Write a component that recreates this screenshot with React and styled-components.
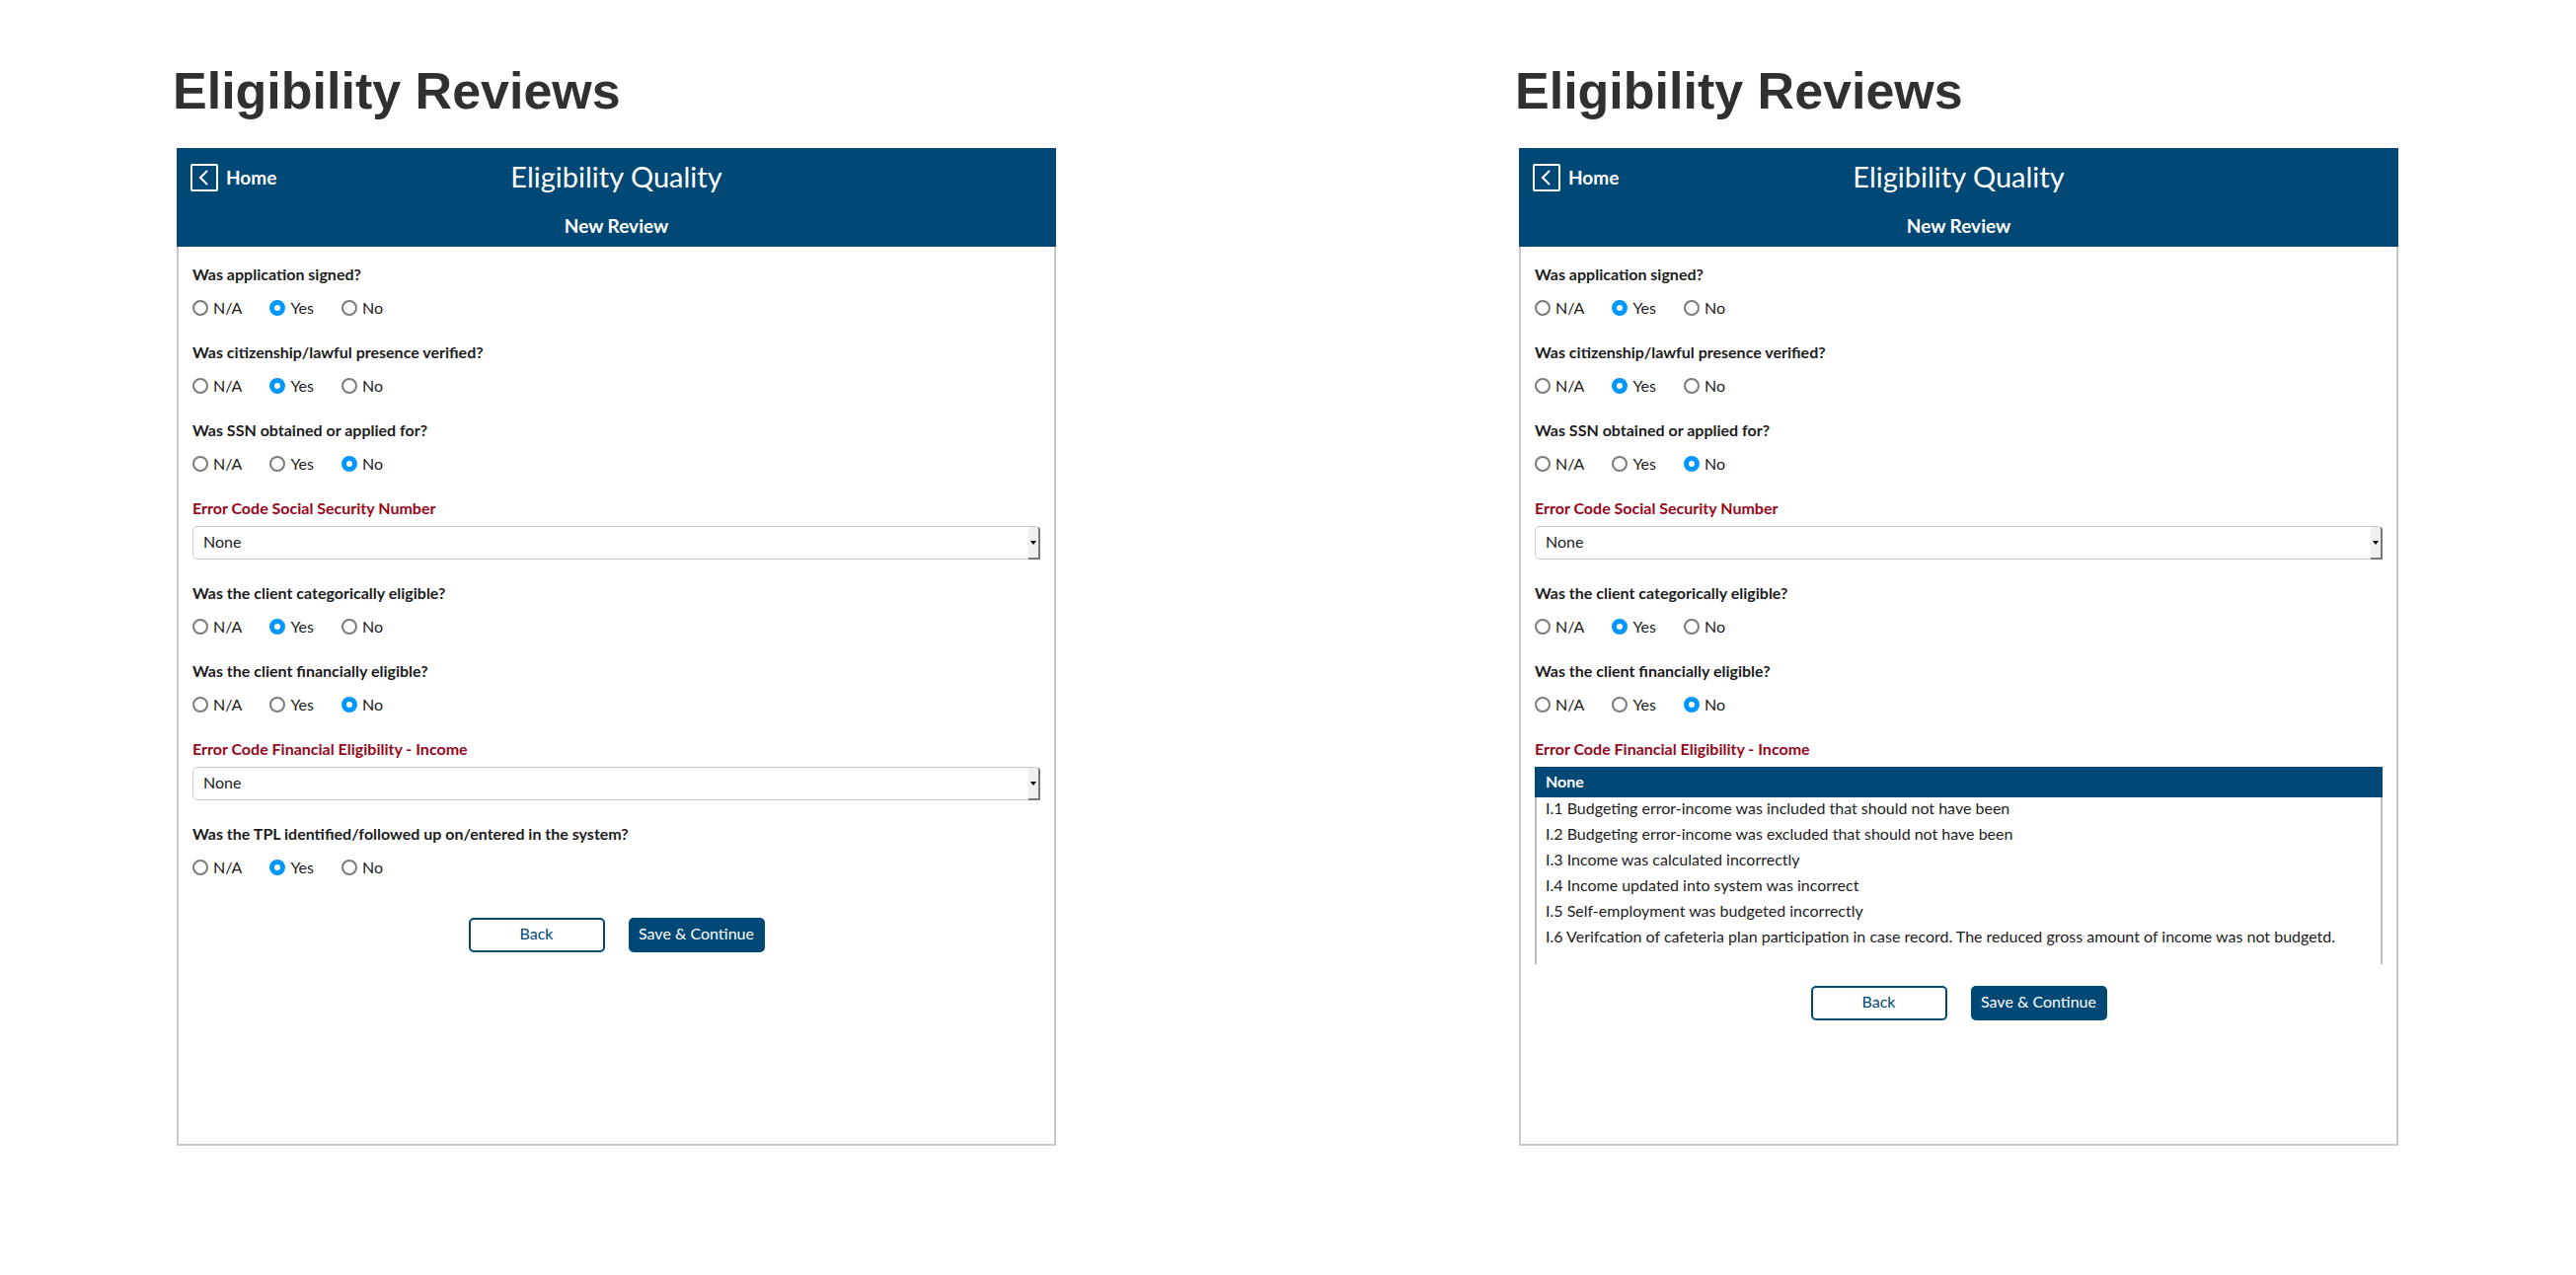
import React, { useId, useState } from "react";
import styled, { createGlobalStyle } from "styled-components";

const navy = "#004876";
const ink = "#1c1c1c";

const GlobalStyle = createGlobalStyle`
  *, *::before, *::after { box-sizing: border-box; }
  body {
    margin: 0;
    background: #fff;
    color: ${ink};
    font-family: Lato, "Liberation Sans", sans-serif;
    font-size: 16px;
    line-height: 24px;
  }
  button, select, input { font: inherit; color: inherit; }
`;

const Page = styled.main`
  display: grid;
  grid-template-columns: repeat(2, minmax(0, 900px));
  justify-content: space-between;
  gap: 48px;
  padding: 60px 175px 130px;
`;

const Title = styled.h1`
  margin: 0 0 26px;
  color: #303030;
  font: bold 52px/64px "Liberation Sans", Arial, sans-serif;
`;

const Card = styled.section`
  display: flex;
  flex-direction: column;
  min-height: 1011px;
  margin: 0 5px 0 4px;
`;

const Header = styled.header`
  display: grid;
  grid-template-columns: 1fr auto 1fr;
  grid-template-rows: 60px 40px;
  align-items: center;
  padding: 0 14px;
  background: ${navy};
  color: #fff;
`;

const HomeLink = styled.a`
  display: inline-flex;
  align-items: center;
  justify-self: start;
  gap: 8px;
  color: #fff;
  font-size: 19px;
  font-weight: 700;
  text-decoration: none;
`;

const AppName = styled.h2`
  margin: 0;
  padding-bottom: 2px;
  font-size: 29px;
  font-weight: 400;
  line-height: 32px;
`;

const StepName = styled.h3`
  grid-column: 1 / -1;
  margin: 0;
  padding-bottom: 2px;
  font-size: 19px;
  font-weight: 700;
  text-align: center;
`;

const Form = styled.form`
  flex: 1;
  padding: 16px 14px 0;
  border: 2px solid #c9c9c9;
  border-top: 0;
`;

const Question = styled.fieldset`
  min-width: 0;
  height: 79px;
  margin: 0;
  padding: 0;
  border: 0;
`;

const Prompt = styled.legend`
  padding: 0;
  font-weight: 700;
`;

const Choices = styled.div`
  display: flex;
  gap: 28px;
  padding-top: 10px;
`;

const Choice = styled.label`
  display: flex;
  align-items: center;
  gap: 5px;
`;

const Radio = styled.input`
  appearance: none;
  width: 16px;
  height: 16px;
  margin: 0;
  border: 2px solid #7c7c7c;
  border-radius: 50%;
  background: #fff;
  &:checked { border: 5px solid #0096ff; }
`;

const Field = styled.div`
  height: ${(p) => (p.$open ? "auto" : "86px")};
`;

const FieldLabel = styled.label`
  display: block;
  margin-bottom: 6px;
  color: #96071b;
  font-weight: 700;
`;

const SelectBox = styled.div`
  position: relative;
`;

const Select = styled.select`
  appearance: none;
  display: block;
  width: 100%;
  height: 34px;
  padding: 0 24px 2px 10px;
  border: 1px solid #c9c9c9;
  border-radius: 5px;
  background: #fff;
`;

const Stepper = styled.span`
  position: absolute;
  top: 1px;
  right: 0;
  bottom: 0;
  display: flex;
  align-items: center;
  justify-content: center;
  width: 12px;
  border-right: 2px solid #777;
  border-bottom: 2px solid #777;
  border-top-right-radius: 3px;
  background: #efefef;
  pointer-events: none;
`;

const ListBox = styled.select`
  appearance: none;
  display: block;
  width: 100%;
  height: 200px;
  padding: 0;
  border: 0;
  border-radius: 0;
  outline: 0;
  overflow: hidden;
  background: #fff;
`;

const Option = styled.option`
  height: 26px;
  padding: 1px 9px 0;
  border: solid #bbb;
  border-width: 0 2px;
  line-height: 24px;
  &:last-child { height: 39px; }
  &:checked {
    height: 31px;
    padding: 5px 11px 0;
    border: 0;
    background: linear-gradient(${navy}, ${navy});
    font-weight: 700;
    -webkit-text-fill-color: #fff;
  }
`;

const Actions = styled.div`
  display: flex;
  justify-content: center;
  gap: 24px;
  padding-top: ${(p) => (p.$tight ? "22px" : "18px")};
`;

const Button = styled.button`
  width: 138px;
  height: 35px;
  padding: 0 0 3px;
  border: 2px solid ${navy};
  border-radius: 5px;
  background: ${(p) => (p.$primary ? navy : "#fff")};
  color: ${(p) => (p.$primary ? "#fff" : navy)};
  white-space: nowrap;
`;

function BackIcon() {
  return (
    <svg width="28" height="28" viewBox="0 0 28 28" fill="none" stroke="#fff" strokeWidth="2" aria-hidden="true">
      <rect x="1" y="1" width="26" height="26" rx="1" />
      <path d="M17 7 L10 14 L17 21" />
    </svg>
  );
}

function YesNo({ children, answer }) {
  const name = useId();
  const [value, setValue] = useState(answer);
  return (
    <Question>
      <Prompt>{children}</Prompt>
      <Choices>
        {["N/A", "Yes", "No"].map((c) => (
          <Choice key={c}>
            <Radio type="radio" name={name} value={c} checked={value === c} onChange={() => setValue(c)} />
            {c}
          </Choice>
        ))}
      </Choices>
    </Question>
  );
}

const incomeCodes = [
  "None",
  "I.1 Budgeting error-income was included that should not have been",
  "I.2 Budgeting error-income was excluded that should not have been",
  "I.3 Income was calculated incorrectly",
  "I.4 Income updated into system was incorrect",
  "I.5 Self-employment was budgeted incorrectly",
  "I.6 Verifcation of cafeteria plan participation in case record. The reduced gross amount of income was not budgetd.",
];

function ErrorCode({ label, options = ["None"], open }) {
  const id = useId();
  return (
    <Field $open={open}>
      <FieldLabel htmlFor={id}>{label}</FieldLabel>
      {open ? (
        <ListBox id={id} size={7} defaultValue="None">
          {options.map((o) => <Option key={o}>{o}</Option>)}
        </ListBox>
      ) : (
        <SelectBox>
          <Select id={id} defaultValue="None">
            {options.map((o) => <option key={o}>{o}</option>)}
          </Select>
          <Stepper aria-hidden="true">
            <svg width="6" height="4" viewBox="0 0 6 4"><path d="M0 0H6L3 4Z" fill="#000" /></svg>
          </Stepper>
        </SelectBox>
      )}
    </Field>
  );
}

function Review({ incomeOpen }) {
  return (
    <div>
      <Title>Eligibility Reviews</Title>
      <Card>
        <Header>
          <HomeLink href="#home"><BackIcon />Home</HomeLink>
          <AppName>Eligibility Quality</AppName>
          <StepName>New Review</StepName>
        </Header>
        <Form onSubmit={(e) => e.preventDefault()}>
          <YesNo answer="Yes">Was application signed?</YesNo>
          <YesNo answer="Yes">Was citizenship/lawful presence verified?</YesNo>
          <YesNo answer="No">Was SSN obtained or applied for?</YesNo>
          <ErrorCode label="Error Code Social Security Number" />
          <YesNo answer="Yes">Was the client categorically eligible?</YesNo>
          <YesNo answer="No">Was the client financially eligible?</YesNo>
          <ErrorCode label="Error Code Financial Eligibility - Income" options={incomeCodes} open={incomeOpen} />
          {!incomeOpen && <YesNo answer="Yes">Was the TPL identified/followed up on/entered in the system?</YesNo>}
          <Actions $tight={incomeOpen}>
            <Button type="button">Back</Button>
            <Button type="submit" $primary>Save &amp; Continue</Button>
          </Actions>
        </Form>
      </Card>
    </div>
  );
}

export default function App() {
  return (
    <>
      <GlobalStyle />
      <Page>
        <Review />
        <Review incomeOpen />
      </Page>
    </>
  );
}
